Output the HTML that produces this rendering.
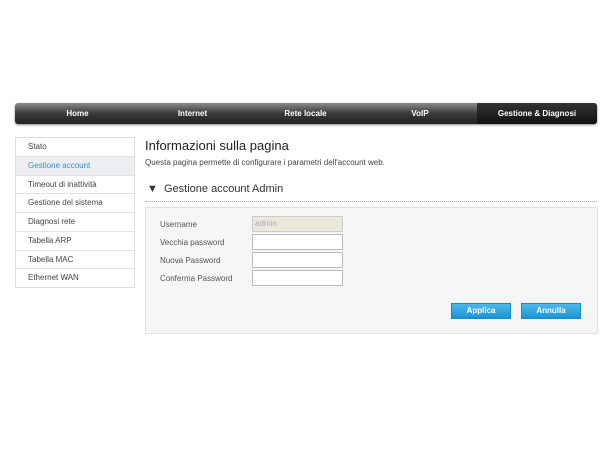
<!DOCTYPE html>
<html><head><style>
body{margin:0;width:610px;height:458px;background:#fff;font-family:"Liberation Sans",sans-serif;position:relative;overflow:hidden}
.nav{position:absolute;left:15px;top:103px;width:582px;height:21px;border-radius:3px;background:linear-gradient(#8a8a8a,#3a3a3a 50%,#222);box-shadow:0 1px 2px #888}
.nav div{position:absolute;top:0;height:21px;line-height:21px;color:#fff;font-size:8px;font-weight:bold;text-align:center}
.act{background:linear-gradient(#333,#111);border-radius:0 3px 3px 0}
.side{position:absolute;left:15px;top:137px;width:118px;border:1px solid #ddd}
.side div{height:17.75px;line-height:17.75px;border-top:1px solid #e3e3e3;font-size:8px;color:#444;padding-left:12px}
.side div:first-child{border-top:none}
.side .sel{background:#eceff1;color:#3a8fc4}
.t{position:absolute;font-size:8px;color:#444}
.box{position:absolute;left:145px;top:207px;width:451px;height:125px;background:#f6f6f6;border:1px solid #e2e2e2}
.in{position:absolute;left:252px;border:1px solid #bbb;background:#fff;font-size:8px;color:#aaa;line-height:14px;padding-left:2px;box-sizing:border-box;width:91px;height:16px}
.btn{position:absolute;top:303px;width:60px;height:16px;background:linear-gradient(#4bb9ea,#1a95d4);border:1px solid #1989c4;color:#fff;font-size:8px;font-weight:bold;text-align:center;line-height:14px;box-sizing:border-box}
</style></head><body>
<div class="nav">
<div style="left:0;width:125px">Home</div>
<div style="left:115px;width:125px">Internet</div>
<div style="left:228px;width:125px">Rete locale</div>
<div style="left:345px;width:120px">VoIP</div>
<div class="act" style="left:462px;width:120px">Gestione &amp; Diagnosi</div>
</div>
<div class="side">
<div>Stato</div><div class="sel">Gestione account</div><div>Timeout di inattività</div><div>Gestione del sistema</div><div>Diagnosi rete</div><div>Tabella ARP</div><div>Tabella MAC</div><div>Ethernet WAN</div>
</div>
<div class="t" style="left:145px;top:138px;font-size:13px;color:#222">Informazioni sulla pagina</div>
<div class="t" style="left:145px;top:158px">Questa pagina permette di configurare i parametri dell'account web.</div>
<div class="t" style="left:147px;top:183px;font-size:11px;color:#333">▼&nbsp; Gestione account Admin</div>
<div style="position:absolute;left:145px;top:201px;width:452px;border-top:1px dotted #aaa"></div>
<div class="box"></div>
<div class="t" style="left:160px;top:220px;color:#555">Username</div>
<div class="t" style="left:160px;top:238px;color:#555">Vecchia password</div>
<div class="t" style="left:160px;top:256px;color:#555">Nuova Password</div>
<div class="t" style="left:160px;top:274px;color:#555">Conferma Password</div>
<div class="in" style="top:216px;background:#ece9dc;border-color:#ccc">admin</div>
<div class="in" style="top:234px"></div>
<div class="in" style="top:252px"></div>
<div class="in" style="top:270px"></div>
<div class="btn" style="left:451px">Applica</div>
<div class="btn" style="left:521px">Annulla</div>
</body></html>
